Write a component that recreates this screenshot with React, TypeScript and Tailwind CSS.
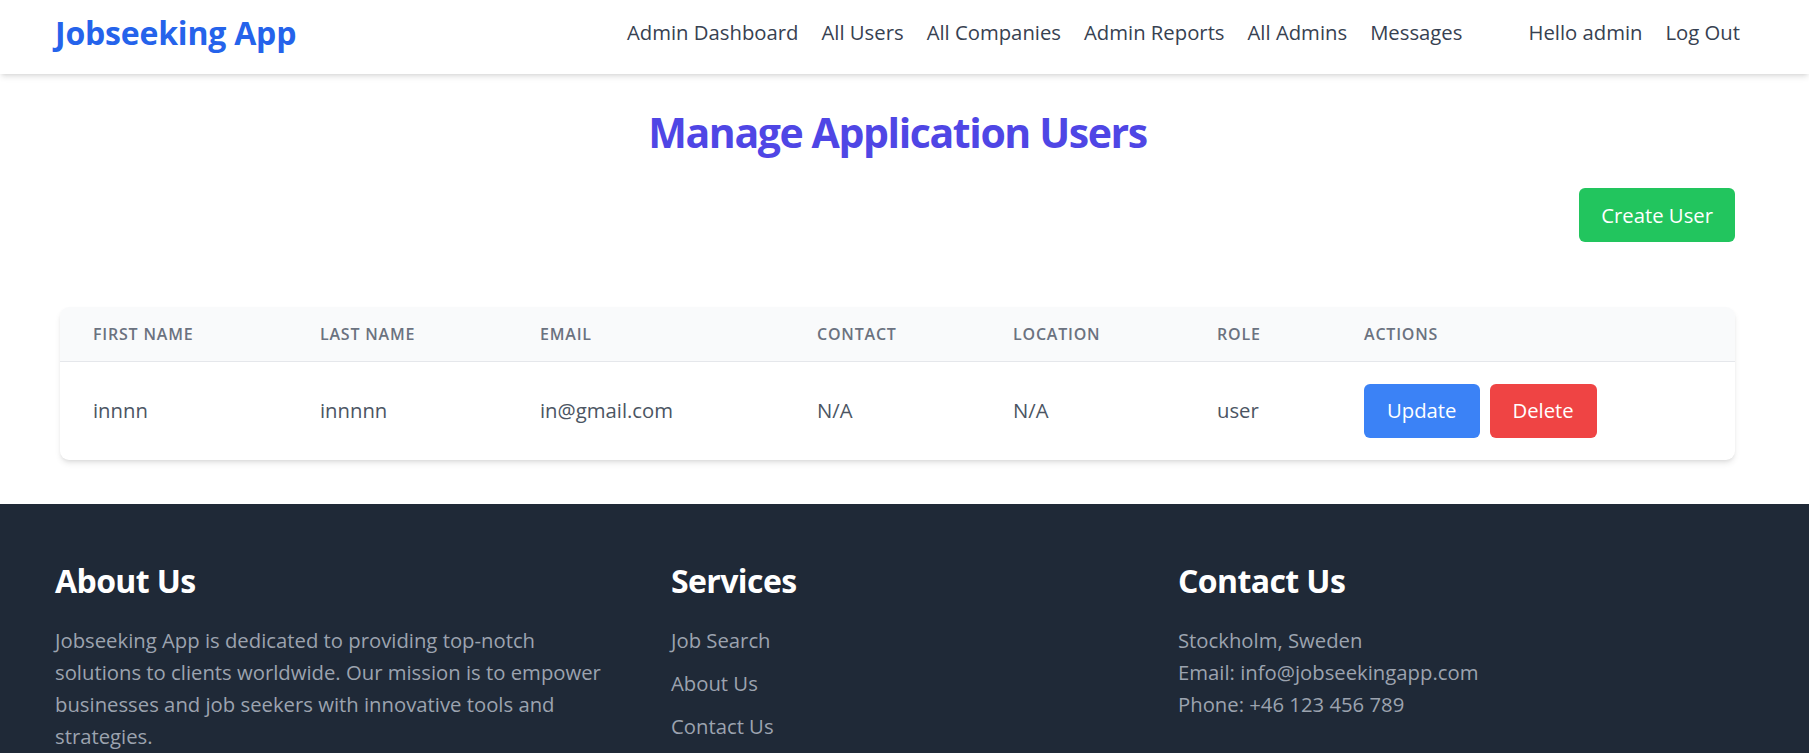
import React from "react";

const NAV_LINKS = ["Admin Dashboard", "All Users", "All Companies", "Admin Reports", "All Admins", "Messages"];

interface User {
  firstName: string; lastName: string; email: string;
  contact: string; location: string; role: string;
}

const USERS: User[] = [
  { firstName: "innnn", lastName: "innnnn", email: "in@gmail.com", contact: "N/A", location: "N/A", role: "user" },
];

const COLUMNS = [
  { label: "First Name", w: "w-[227px]" },
  { label: "Last Name", w: "w-[220px]" },
  { label: "Email", w: "w-[277px]" },
  { label: "Contact", w: "w-[196px]" },
  { label: "Location", w: "w-[204px]" },
  { label: "Role", w: "w-[147px]" },
  { label: "Actions", w: "" },
];

function Navbar() {
  return (
    <nav className="h-[74px] bg-white shadow-[0_4px_6px_-1px_rgba(0,0,0,0.1),0_2px_4px_-2px_rgba(0,0,0,0.1)] flex items-center justify-between pl-[55px] pr-[69px] pb-[9px] relative z-10">
      <a className="text-[32px] font-bold text-[#2563eb] tracking-[-0.2px] leading-none">Jobseeking App</a>
      <div className="flex items-center text-[20.3px] text-[#374151]">
        <div className="flex items-center gap-[23px]">
          {NAV_LINKS.map((l) => (
            <a key={l} className="hover:text-blue-600 cursor-pointer">{l}</a>
          ))}
        </div>
        <div className="flex items-center gap-[23px] ml-[66px]">
          <span>Hello admin</span>
          <a className="cursor-pointer">Log Out</a>
        </div>
      </div>
    </nav>
  );
}

function UsersTable() {
  return (
    <div className="rounded-[9px] bg-white shadow-[0_4px_6px_-1px_rgba(0,0,0,0.1),0_2px_4px_-2px_rgba(0,0,0,0.1)] overflow-hidden">
      <table className="w-full text-left border-collapse">
        <thead className="bg-[#f9fafb] border-b border-[#e5e7eb]">
          <tr className="h-[54px]">
            {COLUMNS.map((c) => (
              <th key={c.label} className={`${c.w} pl-[33px] text-[16px] font-semibold uppercase tracking-[0.05em] text-[#6b7280]`}>
                {c.label}
              </th>
            ))}
          </tr>
        </thead>
        <tbody className="text-[20.3px] text-[#4b5563]">
          {USERS.map((u) => (
            <tr key={u.email}>
              <td className="pl-[33px] py-[22px]">{u.firstName}</td>
              <td className="pl-[33px] py-[22px]">{u.lastName}</td>
              <td className="pl-[33px] py-[22px]">{u.email}</td>
              <td className="pl-[33px] py-[22px]">{u.contact}</td>
              <td className="pl-[33px] py-[22px]">{u.location}</td>
              <td className="pl-[33px] py-[22px]">{u.role}</td>
              <td className="pl-[33px] py-[22px]">
                <div className="flex gap-[10px]">
                  <button className="h-[54px] px-[23px] bg-[#3b82f6] text-white rounded-[6px]">Update</button>
                  <button className="h-[54px] px-[23px] bg-[#ef4444] text-white rounded-[6px]">Delete</button>
                </div>
              </td>
            </tr>
          ))}
        </tbody>
      </table>
    </div>
  );
}

function Footer() {
  return (
    <footer className="bg-[#1f2937] pt-[57px] pb-[60px] pl-[55px] pr-[55px]">
      <div className="flex">
        <div className="w-[616px]">
          <h3 className="text-[32px] leading-[40px] font-bold text-white tracking-[-0.6px] mb-[23px]">About Us</h3>
          <p className="w-[562px] text-[20.3px] leading-[32.3px] text-[#9ca3af]">
            Jobseeking App is dedicated to providing top-notch solutions to clients worldwide. Our mission is to empower businesses and job seekers with innovative tools and strategies.
          </p>
        </div>
        <div className="w-[507px]">
          <h3 className="text-[32px] leading-[40px] font-bold text-white tracking-[-0.6px] mb-[23px]">Services</h3>
          <ul className="text-[20.3px] leading-[32.3px] text-[#9ca3af] flex flex-col gap-[11px]">
            <li>Job Search</li>
            <li>About Us</li>
            <li>Contact Us</li>
          </ul>
        </div>
        <div className="flex-1">
          <h3 className="text-[32px] leading-[40px] font-bold text-white tracking-[-0.6px] mb-[23px]">Contact Us</h3>
          <div className="text-[20.3px] leading-[32.3px] text-[#9ca3af]">
            <p>Stockholm, Sweden</p>
            <p>Email: info@jobseekingapp.com</p>
            <p>Phone: +46 123 456 789</p>
          </div>
        </div>
      </div>
    </footer>
  );
}

export default function App() {
  return (
    <div className="min-h-screen bg-white font-['Open_Sans',sans-serif]">
      <Navbar />
      <main className="pl-[60px] pr-[74px] pt-[35px] pb-[44px]">
        <h1 className="text-[41px] leading-[46px] font-bold text-[#4f46e5] text-center tracking-[-1.4px]">
          Manage Application Users
        </h1>
        <div className="flex justify-end mt-[33px] mb-[65px]">
          <button className="h-[54px] px-[22px] bg-[#22c55e] text-white text-[20.3px] rounded-[6px]">Create User</button>
        </div>
        <UsersTable />
      </main>
      <Footer />
    </div>
  );
}
